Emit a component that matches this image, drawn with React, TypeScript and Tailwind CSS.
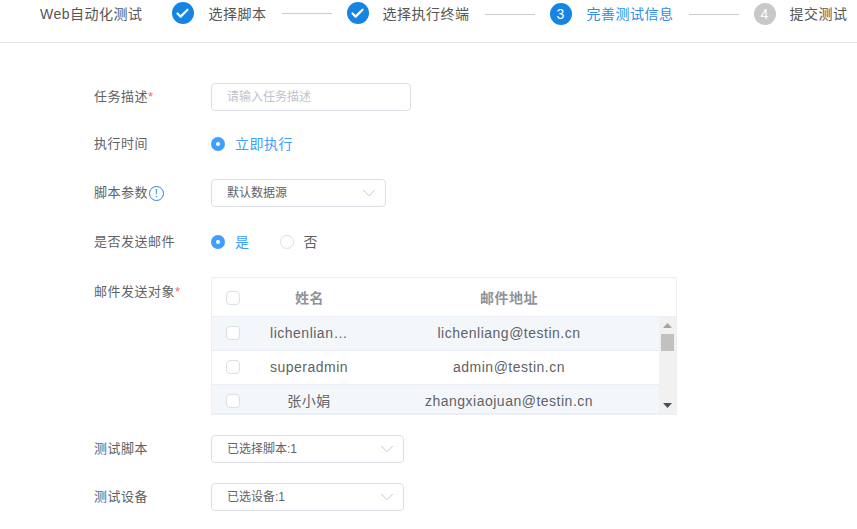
import { Check, ChevronDown } from "lucide-react";
import type { ReactNode } from "react";

function StepDone({ label, gap }: { label: string; gap: string }) {
  return (
    <div className="flex items-center">
      <div className="flex h-[22px] w-[22px] items-center justify-center rounded-full bg-[#1584e3] -translate-y-px">
        <Check size={15} strokeWidth={3.5} className="text-white" />
      </div>
      <span className={`text-[#555] ${gap}`}>{label}</span>
    </div>
  );
}

function Line({ up }: { up?: boolean }) {
  return <div className={`mx-[15px] h-px w-[50px] bg-[#ccc] ${up ? "-translate-y-px" : ""}`} />;
}

function Label({ children }: { children: ReactNode }) {
  return <div className="flex w-[117px] shrink-0 items-center tracking-[0.5px] text-[#606266]">{children}</div>;
}

function Radio({ on }: { on?: boolean }) {
  return on ? (
    <div className="flex h-[14px] w-[14px] items-center justify-center rounded-full bg-[#409eff]">
      <div className="h-1 w-1 rounded-full bg-white" />
    </div>
  ) : (
    <div className="h-[14px] w-[14px] rounded-full border border-[#dcdfe6] bg-white" />
  );
}

function Select({ text, w }: { text: string; w: string }) {
  return (
    <div className={`flex h-7 items-center justify-between rounded border border-[#dcdfe6] bg-white pl-[15px] pr-[5px] text-xs text-[#606266] ${w}`}>
      <span>{text}</span>
      <ChevronDown size={22} strokeWidth={1} className="text-[#c0c4cc]" />
    </div>
  );
}

function Box() {
  return <div className="h-[14px] w-[14px] rounded-sm border border-[#dcdfe6] bg-white" />;
}

const users = [
  { name: "lichenlian…", mail: "lichenliang@testin.cn", bg: "bg-[#f4f7fa]" },
  { name: "superadmin", mail: "admin@testin.cn", bg: "bg-white" },
  { name: "张小娟", mail: "zhangxiaojuan@testin.cn", bg: "bg-[#f4f7fa]" },
];

export default function App() {
  return (
    <div className="h-[529px] overflow-hidden bg-white font-['Liberation_Sans','Noto_Sans_CJK_SC',sans-serif] text-[13px]">
      <div className="flex h-[43px] items-center border-b border-[#e2e2e2] pb-[14px] pl-10 text-sm tracking-[0.5px] whitespace-nowrap">
        <span className="mr-[29px] text-[#555]">Web自动化测试</span>
        <StepDone label="选择脚本" gap="ml-[15px]" />
        <Line up />
        <StepDone label="选择执行终端" gap="ml-[14px]" />
        <Line />
        <div className="flex h-[22px] w-[22px] items-center justify-center rounded-full bg-[#1584e3] text-white">3</div>
        <span className="ml-[15px] text-[#2f8be6]">完善测试信息</span>
        <Line />
        <div className="flex h-[22px] w-[22px] items-center justify-center rounded-full bg-[#c8c8c8] text-white">4</div>
        <span className="ml-[14px] text-[#555]">提交测试</span>
      </div>

      <div className="pl-[94px] pt-10">
        <div className="flex h-7 items-center">
          <Label>
            任务描述<span className="text-[#f56c6c]">*</span>
          </Label>
          <div className="flex h-7 w-[200px] items-center rounded border border-[#dcdfe6] bg-white pl-[15px] text-xs text-[#c0c4cc]">
            请输入任务描述
          </div>
        </div>

        <div className="mt-[19px] flex h-7 items-center">
          <Label>执行时间</Label>
          <Radio on />
          <span className="ml-[10px] text-sm tracking-[0.5px] text-[#409eff]">立即执行</span>
        </div>

        <div className="mt-[21px] flex h-7 items-center">
          <Label>
            脚本参数
            <span className="ml-px flex h-[15px] w-[15px] items-center justify-center rounded-full border border-[#2f7fe0] text-[11px] text-[#2f7fe0]">
              !
            </span>
          </Label>
          <Select text="默认数据源" w="w-[175px]" />
        </div>

        <div className="mt-[21px] flex h-7 items-center">
          <Label>是否发送邮件</Label>
          <Radio on />
          <span className="ml-[10px] text-sm tracking-[0.5px] text-[#409eff]">是</span>
          <div className="ml-[30px]">
            <Radio />
          </div>
          <span className="ml-[10px] text-sm tracking-[0.5px] text-[#606266]">否</span>
        </div>

        <div className="mt-[21px] flex">
          <div className="w-[117px] shrink-0 pt-[5px] tracking-[0.5px] text-[#606266]">
            邮件发送对象<span className="text-[#f56c6c]">*</span>
          </div>
          <div className="h-[138px] w-[466px] overflow-hidden border border-[#ebeef5] text-sm tracking-[0.5px]">
            <div className="flex h-[39px] items-center border-b border-[#ebeef5] pt-[2px] font-bold text-[#909399]">
              <div className="w-[47px] pl-[14px]">
                <Box />
              </div>
              <div className="w-[100px] pl-px text-center">姓名</div>
              <div className="w-[300px] text-center">邮件地址</div>
            </div>
            <div className="flex h-[97px] border-b border-[#ebeef5]">
              <div className="h-[96px] w-[447px] overflow-hidden">
                {users.map((u) => (
                  <div key={u.name} className={`flex h-[34px] items-center border-b border-[#ebeef5] pb-px text-[#606266] ${u.bg}`}>
                    <div className="w-[47px] pl-[14px]">
                      <Box />
                    </div>
                    <div className="w-[100px] text-center">{u.name}</div>
                    <div className="w-[300px] text-center">{u.mail}</div>
                  </div>
                ))}
              </div>
              <div className="flex h-[97px] w-[17px] flex-col items-center bg-[#f1f1f1]">
                <svg width="9" height="5" viewBox="0 0 9 5" className="mt-[6px] shrink-0">
                  <path d="M4.5 0L9 5H0z" fill="#a3a3a3" />
                </svg>
                <div className="mt-[6px] h-[17px] w-[13px] bg-[#c1c1c1]" />
                <svg width="9" height="5" viewBox="0 0 9 5" className="mt-auto mb-[6px] shrink-0">
                  <path d="M0 0H9L4.500 5z" fill="#505050" />
                </svg>
              </div>
            </div>
          </div>
        </div>

        <div className="mt-5 flex h-7 items-center">
          <Label>测试脚本</Label>
          <Select text="已选择脚本:1" w="w-[193px]" />
        </div>

        <div className="mt-5 flex h-7 items-center">
          <Label>测试设备</Label>
          <Select text="已选设备:1" w="w-[193px]" />
        </div>
      </div>
    </div>
  );
}
